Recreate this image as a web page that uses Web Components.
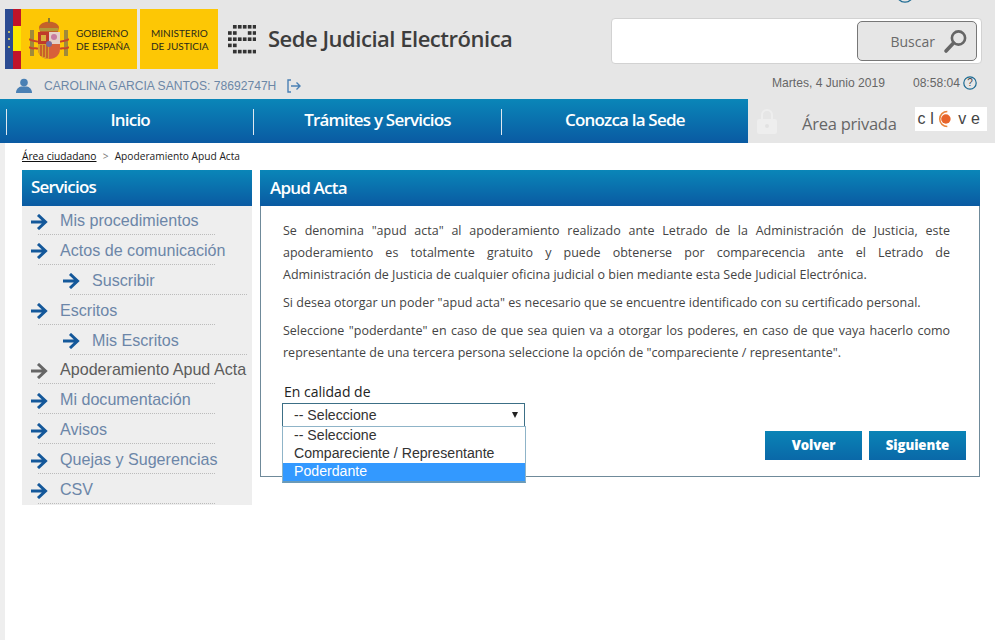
<!DOCTYPE html>
<html lang="es">
<head>
<meta charset="utf-8">
<title>Sede Judicial Electrónica</title>
<style>
  html, body { margin: 0; padding: 0; background: #fff; }
  body { font-family: "Open Sans", sans-serif; }
</style>
</head>
<body>
<sede-page></sede-page>

<script>
// small helper so every element gets an open shadow root with its markup
class BaseEl extends HTMLElement {
  constructor() {
    super();
    this.attachShadow({ mode: 'open' });
    this.shadowRoot.innerHTML = this.markup();
  }
  markup() { return ''; }
}

class SedeLogo extends BaseEl {
  markup() {
    return `
      <style>
        :host { display: flex; gap: 3px; height: 60px; margin-left: 5px; font-family: Lato, sans-serif; color: #2a2a1a; }
        .gob { width: 132px; background: #fdc705; display: flex; align-items: center; }
        .min { width: 78px; background: #fdc705; display: flex; align-items: center; padding-left: 11px; box-sizing: border-box; }
        .flag { width: 16px; height: 60px; flex: none; }
        .arms { width: 40px; height: 44px; margin: 0 6px 0 8px; flex: none; }
        .txt { font-size: 10px; line-height: 12.5px; white-space: nowrap; }
        .txt div { height: 12.5px; }
        .gob .txt { margin-left: 1px; margin-top: 1px; }
        .min .txt { margin-top: 1px; }
      </style>
      <div class="gob">
        <svg class="flag" viewBox="0 0 16 60">
          <rect width="8" height="60" fill="#2b4b92"/>
          <rect x="8" width="8" height="60" fill="#c0142a"/>
          <rect x="8" y="17" width="8" height="25" fill="#fbe800"/>
          <circle cx="4" cy="23" r="1" fill="#e8d860"/><circle cx="4" cy="30" r="1" fill="#e8d860"/><circle cx="4" cy="38" r="1" fill="#e8d860"/>
        </svg>
        <svg class="arms" viewBox="0 0 40 44">
          <rect x="1" y="13" width="4" height="26" fill="#a08a3a"/>
          <rect x="35" y="13" width="4" height="26" fill="#a08a3a"/>
          <path d="M0 22c3 3 7 1 9 3M40 22c-3 3-7 1-9 3" stroke="#c8452a" stroke-width="2" fill="none"/>
          <path d="M0 30c3 3 7 0 9 2M40 30c-3 3-7 0-9 2" stroke="#c8452a" stroke-width="2" fill="none"/>
          <path d="M10 10c2-7 18-7 20 0l-1 5H11z" fill="#c4612a"/>
          <rect x="11" y="11" width="18" height="3" fill="#b09a3a"/>
          <path d="M20 1v5" stroke="#8a7a30" stroke-width="2"/>
          <path d="M9 15h22v17c0 7-6 10-11 10S9 39 9 32z" fill="#d8603a"/>
          <rect x="20" y="15" width="11" height="12" fill="#e4d0c8"/>
          <rect x="9" y="15" width="11" height="12" fill="#c03a2a"/>
          <path d="M9 27h11v15c-5 0-11-3-11-10z" fill="#d8a02a"/>
          <path d="M12 28v11M15 28v12M18 28v13" stroke="#c03a2a" stroke-width="1.2"/>
          <circle cx="20" cy="27" r="3" fill="#7a6a9a"/>
          <circle cx="25" cy="20" r="3" fill="#c87aa0"/>
          <rect x="12" y="18" width="5" height="6" fill="#d8b040"/>
        </svg>
        <div class="txt"><div>GOBIERNO</div><div>DE ESPAÑA</div></div>
      </div>
      <div class="min"><div class="txt"><div>MINISTERIO</div><div>DE JUSTICIA</div></div></div>
    `;
  }
}

class SedeTitle extends BaseEl {
  markup() {
    // the dotted "E" mark: five rows on a six column grid
    const rows = [[1,2,3,4,5],[0,1,4,5],[0,1,2,3,4,5],[0,1],[1,2,3,4,5]];
    let dots = '';
    rows.forEach((r, y) => r.forEach(x => { dots += `<rect x="${x * 4.95}" y="${y * 6.2}" width="3.7" height="3.6" fill="#333"/>`; }));
    return `
      <style>
        :host { display: flex; align-items: center; gap: 13px; margin-left: 10px; height: 58px; }
        svg { width: 28px; height: 29px; flex: none; margin-top: 2px; }
        span { font: 600 22px/1 "Open Sans", sans-serif; color: #3d3d3d; letter-spacing: -.48px; white-space: nowrap; margin-left: -1px; }
      </style>
      <svg viewBox="0 0 28 29">${dots}</svg><span>Sede Judicial Electrónica</span>
    `;
  }
}

class SedeSearch extends BaseEl {
  markup() {
    return `
      <style>
        :host { display: flex; justify-content: flex-end; align-items: center; box-sizing: border-box; width: 371px; height: 46px; margin-top: 9px; padding-right: 4px;
                background: #fff; border: 1px solid #d2d2d2; border-radius: 4px; }
        .btn { box-sizing: border-box; width: 120px; height: 40px; background: #e6e6e6; border: 1px solid #777; border-radius: 5px;
               display: flex; align-items: center; justify-content: flex-end; gap: 8px; padding-right: 8px; }
        span { font: 14px "Open Sans", sans-serif; color: #6a6a6a; }
        svg { width: 25px; height: 25px; }
      </style>
      <div class="btn"><span>Buscar</span>
        <svg viewBox="0 0 25 25"><circle cx="15.500" cy="9" r="6.600" fill="none" stroke="#666" stroke-width="2.600"/><path d="M10.500 14l-7.500 8" stroke="#666" stroke-width="3.600" stroke-linecap="round"/></svg>
      </div>
    `;
  }
}

class HelpIcon extends BaseEl {
  markup() {
    return `
      <style>
        :host { display: inline-block; width: 14px; height: 14px; }
        svg { display: block; width: 14px; height: 14px; }
      </style>
      <svg viewBox="0 0 14 14"><circle cx="7" cy="7" r="6.200" fill="none" stroke="#1c6a92" stroke-width="1.200"/><text x="7" y="10.400" text-anchor="middle" font-family="Liberation Sans" font-size="10" fill="#444">?</text></svg>
    `;
  }
}

class SedeUserbar extends BaseEl {
  markup() {
    return `
      <style>
        :host { display: flex; align-items: center; height: 24px; padding-left: 16px; font: 12.1px "Liberation Sans", sans-serif; }
        .user { color: #6c87a6; margin-left: 12px; white-space: nowrap; position: relative; top: -1px; }
        .ico { width: 16px; height: 16px; flex: none; margin-top: -2px; }
        .out { margin-left: 10px; }
        .right { margin-left: auto; display: flex; align-items: center; color: #666; padding-right: 18px; margin-top: -9px; }
        .time { margin-left: 28px; margin-right: 3px; }
      </style>
      <svg class="ico" viewBox="0 0 16 16"><circle cx="8" cy="4.600" r="3.800" fill="#4a80b4"/><path d="M0 15c0-4 3-6 5-6.400h6c2 .4 5 2.400 5 6.400z" fill="#4a80b4"/></svg>
      <span class="user">CAROLINA GARCIA SANTOS: 78692747H</span>
      <svg class="ico out" viewBox="0 0 16 16"><path d="M5 2H2v12h3" fill="none" stroke="#4a80b4" stroke-width="1.400"/><path d="M5 8h9M10.500 4.500L14 8l-3.500 3.500" fill="none" stroke="#4a80b4" stroke-width="1.400"/></svg>
      <div class="right"><span>Martes, 4 Junio 2019</span><span class="time">08:58:04</span><help-icon></help-icon></div>
    `;
  }
}

class SedeHeader extends BaseEl {
  markup() {
    return `
      <style>
        :host { display: block; background: #e6e6e6; height: 99px; position: relative; overflow: hidden; }
        .top { display: flex; align-items: flex-start; padding-top: 9px; height: 66px; padding-right: 13px; }
        sede-search { margin-left: auto; }
        .sliver { position: absolute; left: 896px; top: -15px; width: 18px; height: 18px; }
      </style>
      <div class="top"><sede-logo></sede-logo><sede-title></sede-title><sede-search></sede-search></div>
      <sede-userbar></sede-userbar>
      <svg class="sliver" viewBox="0 0 18 18"><circle cx="9" cy="9" r="8.200" fill="none" stroke="#1c6a92" stroke-width="1.300"/></svg>
    `;
  }
}

class SedeNav extends BaseEl {
  markup() {
    return `
      <style>
        :host { display: flex; height: 44px; background: #e6e6e6; }
        nav { width: 748px; padding: 10px 0 0 6px; box-sizing: border-box; display: flex; align-items: flex-start;
              background: linear-gradient(#0a86b8, #0a5aa2); }
        a { width: 247.5px; height: 26px; box-sizing: border-box; border-left: 1px solid #dfe9f0; text-align: center;
            font: 600 17px/21px "Open Sans", sans-serif; letter-spacing: -.8px; color: #fff; }
        .priv { flex: 1; display: flex; align-items: center; padding: 0 8px 0 9px; }
        .lock { width: 20px; height: 26px; flex: none; }
        .lab { margin-left: 25px; font: 500 16.5px "Open Sans", sans-serif; letter-spacing: -.25px; color: #666; white-space: nowrap; position: relative; top: 2px; }
        .clave { margin-left: auto; width: 72px; height: 24px; background: #fff; flex: none; display: flex; align-items: center; justify-content: center;
                 font: 16px "Liberation Sans", sans-serif; color: #444; position: relative; top: -2px; }
        .clave span { letter-spacing: 4.6px; }
        .clave svg { width: 18px; height: 18px; margin: 0 5px 0 -3px; }
      </style>
      <nav><a>Inicio</a><a>Trámites y Servicios</a><a>Conozca la Sede</a></nav>
      <div class="priv">
        <svg class="lock" viewBox="0 0 20 26"><path d="M5 11V7a5 5 0 0 1 10 0v4" fill="none" stroke="#eee" stroke-width="2"/><rect x="0" y="11" width="20" height="15" rx="2" fill="#eee"/><circle cx="10" cy="18" r="2" fill="#e2e2e2"/></svg>
        <span class="lab">Área privada</span>
        <div class="clave"><span>cl</span><svg viewBox="0 0 19 19"><path d="M13 1.500a8 8 0 1 0 0 16" fill="none" stroke="#e8843a" stroke-width="1.600"/><circle cx="11.500" cy="9.500" r="5" fill="#e8642a"/></svg><span>ve</span></div>
      </div>
    `;
  }
}

class MenuItem extends BaseEl {
  markup() {
    return `
      <style>
        :host { display: block; height: 29.9px; position: relative; --c: #14589a; --t: #6c86a8; }
        :host([current]) { --c: #666; --t: #5c5c5c; }
        .row { display: flex; align-items: center; height: 29px; padding-left: 8px; }
        :host([sub]) .row { padding-left: 40px; }
        svg { width: 18px; height: 16px; flex: none; margin-right: 12px; margin-top: 2px; }
        .t { font: 16.1px "Liberation Sans", sans-serif; color: var(--t); white-space: nowrap; }
        .dots { position: absolute; left: 16px; top: 28px; width: 177px; border-top: 1px dotted #bbb; }
        :host([sub]) .dots { left: 48px; }
      </style>
      <div class="row">
        <svg viewBox="0 0 18 16"><path d="M1 8h14.500M8 1l7.500 7-7.500 7" fill="none" stroke="var(--c)" stroke-width="3"/></svg>
        <span class="t"><slot></slot></span>
      </div>
      <div class="dots"></div>
    `;
  }
}

class SideMenu extends BaseEl {
  markup() {
    return `
      <style>
        :host { display: block; width: 230px; flex: none; }
        h2 { margin: 0; height: 36px; padding-left: 9px; background: linear-gradient(#0a86b8, #0a5aa2); color: #fff;
             font: 600 17px/34px "Open Sans", sans-serif; letter-spacing: -.8px; }
        .list { height: 299px; background: #eee; }
      </style>
      <h2>Servicios</h2>
      <div class="list"><slot></slot></div>
    `;
  }
}

class FakeSelect extends BaseEl {
  markup() {
    return `
      <style>
        :host { display: block; width: 243px; margin-left: -1px; position: relative; font: 14.15px "Liberation Sans", sans-serif; color: #333; }
        .box { box-sizing: border-box; height: 24px; border: 1px solid #3c6f86; padding-left: 11px; line-height: 22px; background: #fff; position: relative; }
        .box i { position: absolute; right: 6px; top: 8px; width: 0; height: 0; border: 3.5px solid transparent; border-top: 6px solid #222; border-bottom: 0; }
        ul { position: absolute; left: 0; top: 23px; width: 244px; box-sizing: border-box; margin: 0; padding: 0; list-style: none; background: #fff;
             border: 1px solid #8fb4c8; border-bottom: 2px solid #6a9ab8; }
        li { height: 18px; line-height: 17px; padding-left: 11px; white-space: nowrap; }
        li.on { background: #3399ff; color: #fff; }
      </style>
      <div class="box">-- Seleccione<i></i></div>
      <ul><li>-- Seleccione</li><li>Compareciente / Representante</li><li class="on">Poderdante</li></ul>
    `;
  }
}

class SedeButton extends BaseEl {
  markup() {
    return `
      <style>
        :host { display: block; width: 97px; height: 29px; background: linear-gradient(#0a84b6, #0a68a8); color: #fff; text-align: center;
                font: 800 13.2px/28px "Open Sans", sans-serif; letter-spacing: -.1px; }
      </style>
      <slot></slot>
    `;
  }
}

class ApudPanel extends BaseEl {
  markup() {
    return `
      <style>
        :host { display: block; width: 720px; height: 307px; box-sizing: border-box; border: 1px solid #6f8a9a; border-top: 0; position: relative; flex: none; }
        h1 { margin: 0 -1px; height: 36px; padding-left: 10px; background: linear-gradient(#0a86b8, #0a5aa2); color: #fff;
             font: 600 17px/36px "Open Sans", sans-serif; letter-spacing: -.8px; }
        .body { padding: 14px 29px 0 22px; font-size: 12.5px; line-height: 22px; color: #444; text-align: justify; }
        .nb { white-space: nowrap; }
        p { margin: 0 0 6px; }
        label { display: block; margin: 18px 0 1px 1px; font-size: 14px; line-height: 20px; color: #222; }
        .btns { position: absolute; right: 13px; bottom: 16px; display: flex; gap: 7px; }
      </style>
      <h1>Apud Acta</h1>
      <div class="body">
        <p>Se denomina "apud acta" al apoderamiento realizado ante Letrado de la Administración de Justicia, este apoderamiento es totalmente gratuito y puede obtenerse por comparecencia ante el Letrado de <span class="nb">Administración de</span> Justicia de cualquier oficina judicial o bien mediante esta Sede Judicial Electrónica.</p>
        <p>Si desea otorgar un poder "apud acta" es necesario que se encuentre identificado con su certificado personal.</p>
        <p>Seleccione "poderdante" en caso de que sea quien va a otorgar los poderes, en caso de que vaya hacerlo como representante de una tercera persona seleccione la opción de "compareciente / representante".</p>
        <label>En calidad de</label>
        <fake-select></fake-select>
      </div>
      <div class="btns"><sede-button>Volver</sede-button><sede-button>Siguiente</sede-button></div>
    `;
  }
}

class SedePage extends BaseEl {
  markup() {
    return `
      <style>
        :host { display: block; }
        main { border-left: 5px solid #eeeeee; height: 497px; box-sizing: border-box; padding-left: 17px; }
        .crumb { height: 27px; padding-top: 6px; box-sizing: border-box; font-size: 10.2px; line-height: 14px; color: #222; white-space: nowrap; }
        .crumb u { color: #111; }
        .crumb b { font-weight: 400; color: #777; margin: 0 3.5px; }
        .cols { display: flex; gap: 8px; }
      </style>
      <sede-header></sede-header>
      <sede-nav></sede-nav>
      <main>
        <div class="crumb"><u>Área ciudadano</u> <b>&gt;</b> Apoderamiento Apud Acta</div>
        <div class="cols">
          <side-menu>
            <menu-item>Mis procedimientos</menu-item>
            <menu-item>Actos de comunicación</menu-item>
            <menu-item sub>Suscribir</menu-item>
            <menu-item>Escritos</menu-item>
            <menu-item sub>Mis Escritos</menu-item>
            <menu-item current>Apoderamiento Apud Acta</menu-item>
            <menu-item>Mi documentación</menu-item>
            <menu-item>Avisos</menu-item>
            <menu-item>Quejas y Sugerencias</menu-item>
            <menu-item>CSV</menu-item>
          </side-menu>
          <apud-panel></apud-panel>
        </div>
      </main>
    `;
  }
}

// children first so nothing is upgraded before its parts exist
customElements.define('sede-logo', SedeLogo);
customElements.define('sede-title', SedeTitle);
customElements.define('sede-search', SedeSearch);
customElements.define('help-icon', HelpIcon);
customElements.define('sede-userbar', SedeUserbar);
customElements.define('sede-header', SedeHeader);
customElements.define('sede-nav', SedeNav);
customElements.define('menu-item', MenuItem);
customElements.define('side-menu', SideMenu);
customElements.define('fake-select', FakeSelect);
customElements.define('sede-button', SedeButton);
customElements.define('apud-panel', ApudPanel);
customElements.define('sede-page', SedePage);
</script>
</body>
</html>
